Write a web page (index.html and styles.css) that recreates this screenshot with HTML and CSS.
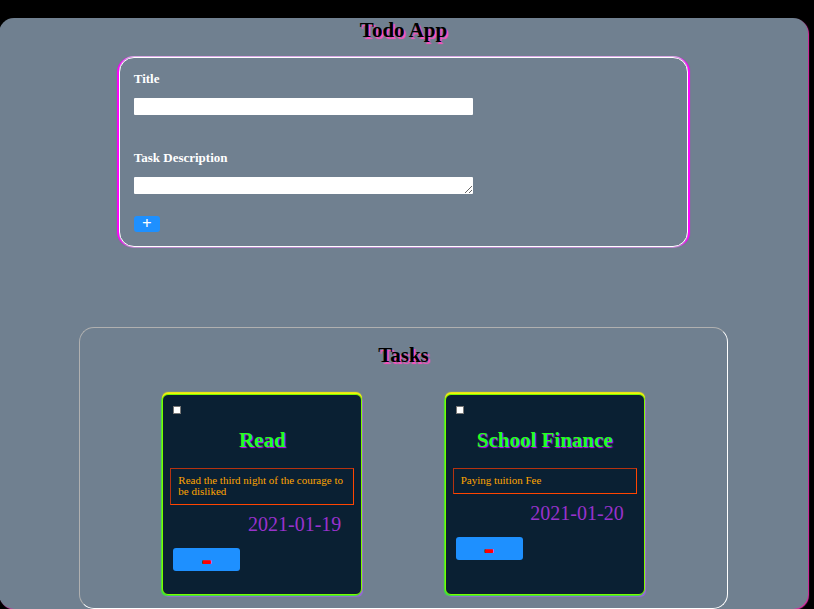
FILE: index.html
```html
<!DOCTYPE html>
<html lang="en">
<head>
<meta charset="utf-8">
<title>Todo App</title>
<link rel="stylesheet" href="styles.css">
</head>
<body>
<main class="app">
  <h1 class="heading">Todo App</h1>
  <form class="form">
    <label class="label" for="title">Title</label>
    <input class="field" id="title" type="text">
    <label class="label" for="description">Task Description</label>
    <textarea class="field" id="description" rows="1"></textarea>
    <button class="add" type="button" aria-label="Add task">+</button>
  </form>
  <section class="tasks">
    <h2 class="heading">Tasks</h2>
    <div class="cards">
      <article class="card">
        <input class="check" type="checkbox" aria-label="Read done">
        <h3 class="name">Read</h3>
        <p class="text">Read the third night of the courage to be disliked</p>
        <time class="date">2021-01-19</time>
        <button class="remove" type="button" aria-label="Remove task">-</button>
      </article>
      <article class="card">
        <input class="check" type="checkbox" aria-label="School Finance done">
        <h3 class="name">School Finance</h3>
        <p class="text">Paying tuition Fee</p>
        <time class="date">2021-01-20</time>
        <button class="remove" type="button" aria-label="Remove task">-</button>
      </article>
    </div>
  </section>
</main>
</body>
</html>
```
FILE: styles.css
```css
* {
  box-sizing: border-box;
}

html {
  background: #000;
}

body {
  margin: 0;
  padding-top: 18px;
  overflow-x: hidden;
  font-family: "Liberation Serif", "Times New Roman", serif;
}

.app {
  margin: 0 6px 0 -1px;
  border-radius: 15px;
  background: slategray;
  box-shadow: 1px 1px 1px #e030a8;
}

.heading {
  margin: 0;
  font-size: 21px;
  line-height: 25px;
  text-align: center;
  color: #000;
  text-shadow: 2px 2px 1px #ff4fc0;
}

.form {
  display: flex;
  flex-direction: column;
  align-items: flex-start;
  width: 70.4%;
  margin: 14px auto 0;
  padding: 13px 14px 14px;
  border: 1px solid #fff;
  border-radius: 15px;
  box-shadow: 0 -1px 0 #d9a8e6, 0 1px 0 #b98acb, -1px 0 0 #f0f, 1px 0 0 #f0f, -2px 0 1px #f0f, 2px 0 1px #f0f;
}

.label {
  font-size: 13px;
  font-weight: bold;
  line-height: 15px;
  color: #fff;
}

.field {
  display: block;
  width: 339px;
  max-width: 100%;
  height: 17px;
  min-height: 17px;
  margin: 12px 0 35px;
  padding: 0 2px;
  border: 0;
  border-radius: 1px;
  background: #fff;
  font: 13px/17px "Liberation Serif", serif;
}

textarea.field {
  margin-bottom: 22px;
  overflow: hidden;
}

.add {
  width: 26px;
  height: 16px;
  padding: 0 0 1px;
  border: 0;
  border-radius: 3px;
  background: dodgerblue;
  color: #fff;
  font: bold 17px/15px "Liberation Serif", serif;
}

.tasks {
  box-sizing: content-box;
  width: 80%;
  margin: 80px auto 0;
  padding: 15px 0 13px;
  border: 1px solid #fff;
  border-color: #b0b0b0 #fff #fff #b0b0b0;
  border-radius: 15px;
}

.cards {
  display: flex;
  flex-wrap: wrap;
  justify-content: space-evenly;
  margin-top: 26px;
}

.card {
  display: flex;
  flex-direction: column;
  width: 200px;
  min-height: 201px;
  padding: 11px 7px;
  border: 1px solid #7cfc00;
  border-radius: 6px;
  background: #0a2033;
  box-shadow: 0 -1px 0 #f2f20a, 0 -2px 1px #f2f20a, -1px 1px 1px #3e3, 1px 2px 1px #96d;
}

.check {
  appearance: none;
  width: 8px;
  height: 8px;
  margin: 0 3px;
  border: 1px solid #767676;
  background: #fff;
}

.name {
  margin: 14px 0 16px;
  font-size: 21px;
  line-height: 24px;
  text-align: center;
  color: #2f2;
  text-shadow: 1px 1px 1px #c0f;
}

.text {
  margin: 0;
  padding: 6px 7px 7px;
  border: 1px solid orangered;
  border-color: #b53210 orangered orangered #b53210;
  font-size: 11px;
  line-height: 11px;
  color: orange;
}

.date {
  margin: 7px 13px 0 0;
  font-size: 20px;
  line-height: 24px;
  text-align: right;
  color: darkorchid;
}

.remove {
  width: 67px;
  height: 23px;
  margin: 12px 3px 0;
  padding: 0;
  border: 0;
  border-radius: 3px;
  background: dodgerblue;
  color: red;
  font: bold 32px/23px "Liberation Serif", serif;
  text-shadow: 0 -1px red;
}
```
